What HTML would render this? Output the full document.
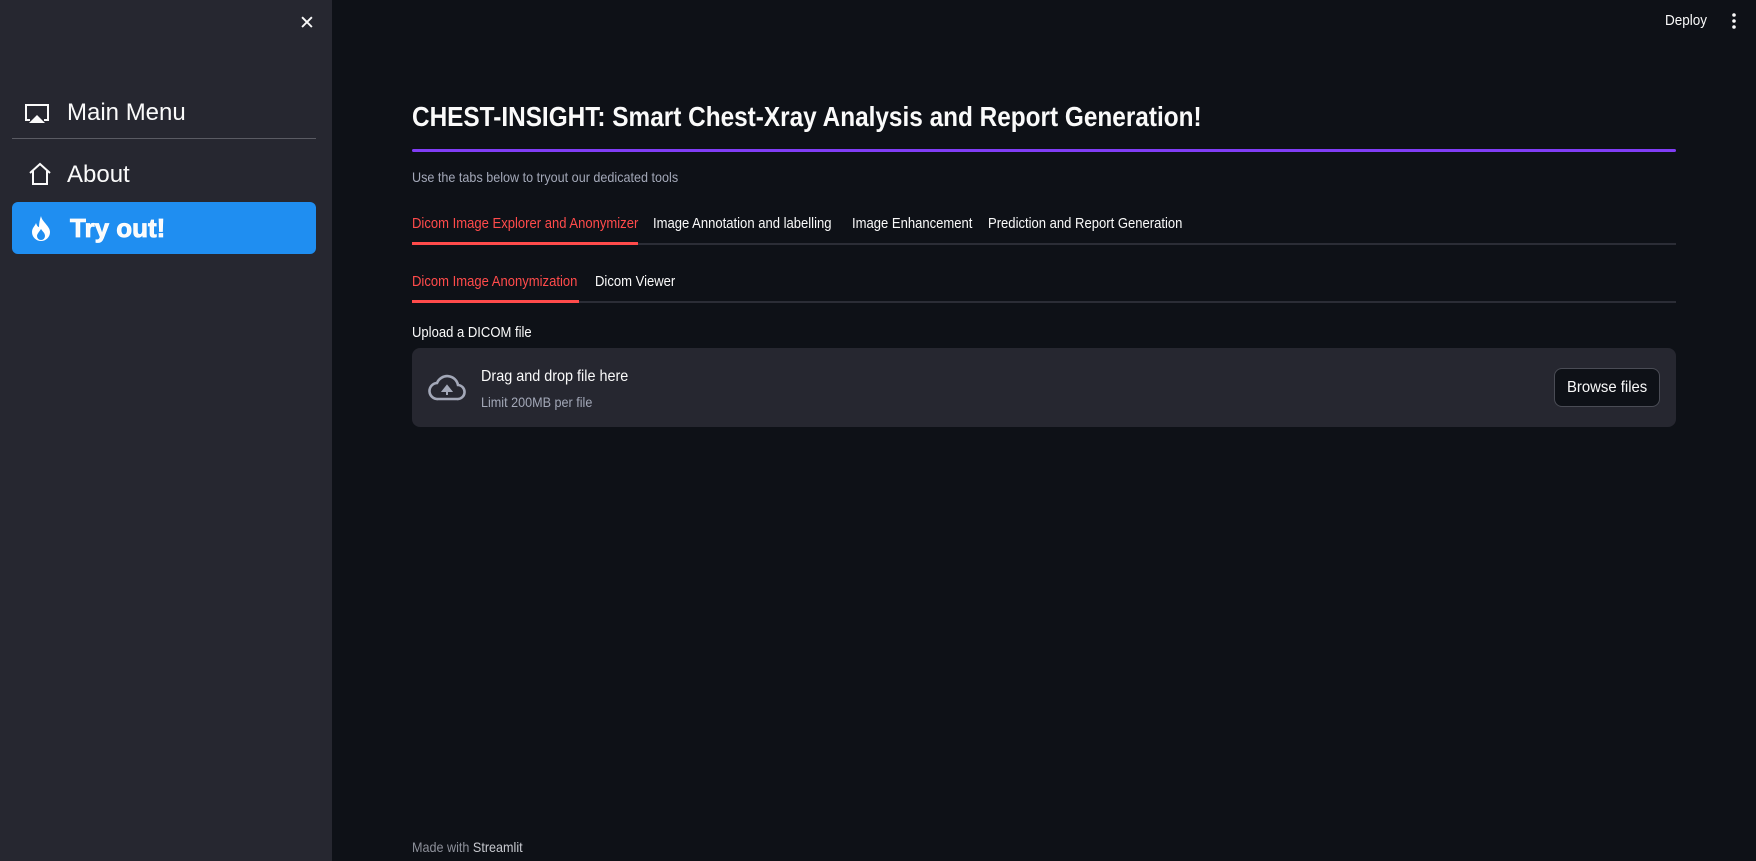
<!DOCTYPE html>
<html><head><meta charset="utf-8"><style>
*{margin:0;padding:0;box-sizing:border-box}
body{width:1756px;height:861px;background:#0e1117;font-family:"Liberation Sans",sans-serif;color:#fafafa;position:relative;overflow:hidden}
.a{position:absolute;white-space:nowrap}
.n{display:inline-block;transform:scaleX(.9);transform-origin:left center}
#sb{position:absolute;left:0;top:0;width:332px;height:861px;background:#262730}
</style></head><body>
<div id="sb">
 <div class="a" style="left:299px;top:12px;font-size:19px;color:#fafafa">✕</div>
 <svg class="a" style="left:24px;top:103px" width="26" height="22" viewBox="0 0 26 22"><path d="M6 17H2V2h22v15h-4" fill="none" stroke="#fafafa" stroke-width="2"/><path d="M5 20L13 12L21 20Z" fill="#fafafa"/></svg>
 <div class="a" style="left:67px;top:99px;font-size:24px">Main Menu</div>
 <div class="a" style="left:12px;top:138px;width:304px;height:1px;background:#5a5b63"></div>
 <svg class="a" style="left:28px;top:162px" width="24" height="24" viewBox="0 0 24 24"><path d="M2 11L12 2l10 9M5 9v13h14V9" fill="none" stroke="#fafafa" stroke-width="2"/></svg>
 <div class="a" style="left:67px;top:161px;font-size:24px">About</div>
 <div class="a" style="left:12px;top:202px;width:304px;height:52px;background:#1f8ef1;border-radius:6px"></div>
 <svg class="a" style="left:30px;top:215px" width="22" height="26" viewBox="0 0 22 26"><path d="M11 1C12 7 20 11 20 17a9 9 0 0 1-18 0c0-4 3-6 4-9 1 3 2 4 3 4 0-4 1-8 2-11z" fill="#fff"/><path d="M11 14c2 3 4 4 4 7a4 4 0 0 1-8 0c0-2 2-4 4-7z" fill="#1f8ef1"/></svg>
 <div class="a" style="left:70px;top:213px;font-size:26px;font-weight:bold;-webkit-text-stroke:0.8px #fff">Try out!</div>
</div>
<div class="a" style="left:1665px;top:12px;font-size:15px"><span class="n">Deploy</span></div>
<svg class="a" style="left:1731px;top:12px" width="6" height="18"><circle cx="3" cy="3" r="1.8" fill="#fafafa"/><circle cx="3" cy="9" r="1.8" fill="#fafafa"/><circle cx="3" cy="15" r="1.8" fill="#fafafa"/></svg>
<div class="a" style="left:412px;top:101px;font-size:28px;font-weight:bold"><span class="n" style="transform:scaleX(.87)">CHEST-INSIGHT: Smart Chest-Xray Analysis and Report Generation!</span></div>
<div class="a" style="left:412px;top:149px;width:1264px;height:3px;background:#803df5;border-radius:2px"></div>
<div class="a" style="left:412px;top:169px;font-size:14px;color:#a3a8b8"><span class="n">Use the tabs below to tryout our dedicated tools</span></div>
<div class="a" style="left:412px;top:243px;width:1264px;height:2px;background:#2b2d36"></div>
<div class="a" style="left:412px;top:242px;width:226px;height:3px;background:#ff4b4b"></div>
<div class="a" style="left:412px;top:216px;font-size:14.5px;color:#ff4b4b"><span class="n">Dicom Image Explorer and Anonymizer</span></div>
<div class="a" style="left:653px;top:216px;font-size:14.5px"><span class="n">Image Annotation and labelling</span></div>
<div class="a" style="left:852px;top:216px;font-size:14.5px"><span class="n">Image Enhancement</span></div>
<div class="a" style="left:988px;top:216px;font-size:14.5px"><span class="n">Prediction and Report Generation</span></div>
<div class="a" style="left:412px;top:301px;width:1264px;height:2px;background:#2b2d36"></div>
<div class="a" style="left:412px;top:300px;width:167px;height:3px;background:#ff4b4b"></div>
<div class="a" style="left:412px;top:274px;font-size:14.5px;color:#ff4b4b"><span class="n">Dicom Image Anonymization</span></div>
<div class="a" style="left:595px;top:274px;font-size:14.5px"><span class="n">Dicom Viewer</span></div>
<div class="a" style="left:412px;top:325px;font-size:14.5px"><span class="n">Upload a DICOM file</span></div>
<div class="a" style="left:412px;top:348px;width:1264px;height:79px;background:#262730;border-radius:8px"></div>
<svg class="a" style="left:428px;top:372px" width="38" height="30" viewBox="0 0 38 30"><path d="M10 27a8 8 0 0 1-1-16 11 11 0 0 1 21 2 7 7 0 0 1-1 14z" fill="none" stroke="#a3a8b8" stroke-width="2.6"/><path d="M19 23v-8m-4 4l4-5 4 5z" fill="#a3a8b8" stroke="#a3a8b8" stroke-width="2"/></svg>
<div class="a" style="left:481px;top:368px;font-size:16px"><span class="n">Drag and drop file here</span></div>
<div class="a" style="left:481px;top:394px;font-size:14px;color:#a3a8b8"><span class="n">Limit 200MB per file</span></div>
<div class="a" style="left:1554px;top:368px;width:106px;height:39px;background:#0e1117;border:1px solid #4a4c55;border-radius:8px"></div>
<div class="a" style="left:1567px;top:379px;font-size:16px"><span class="n" style="transform:scaleX(.93)">Browse files</span></div>
<div class="a" style="left:412px;top:839px;font-size:14px;color:#8d909a"><span class="n">Made with <span style="color:#c8cad0">Streamlit</span></span></div>
</body></html>
